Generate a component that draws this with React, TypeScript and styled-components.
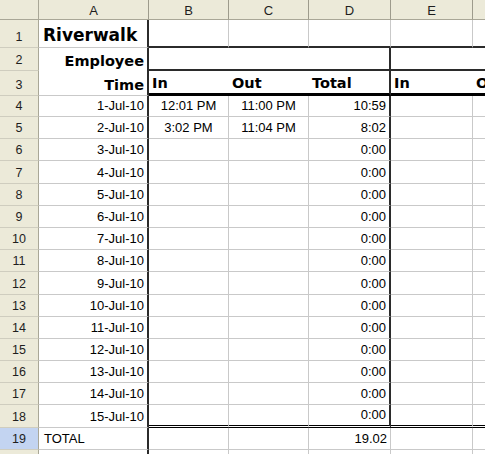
import styled, { createGlobalStyle, css } from 'styled-components';

const GlobalStyle = createGlobalStyle`
  html, body { margin: 0; padding: 0; background: #fff; }
  body { width: 485px; height: 454px; overflow: hidden; }
`;

type Edge = 'grid' | 'dark' | 'thick' | 'double' | 'none';

const edge = (e: Edge) => {
  switch (e) {
    case 'grid': return '1px solid #c9c9c9';
    case 'dark': return '2px solid #2b2b2b';
    case 'thick': return '3px solid #000';
    case 'double': return '3px double #000';
    default: return '0';
  }
};

const Sheet = styled.div`
  width: 485px;
  height: 454px;
  overflow: hidden;
  display: grid;
  grid-template-columns: 39px 110px 80px 80px 82px 82px 82px;
  grid-template-rows: 20px 28px 23px 25px 21px repeat(14, 22.2px) 22px 22px;
  font-family: "Liberation Sans", Arial, sans-serif;
  font-size: 13px;
  color: #000;
`;

const HeadBase = css`
  box-sizing: border-box;
  background: #ecead9;
  display: flex;
  align-items: center;
  justify-content: center;
  font-size: 13px;
  color: #1e1e1e;
`;

const Corner = styled.div`
  ${HeadBase};
  border-right: 1px solid #a9a797;
  border-bottom: 1px solid #a9a797;
`;

const ColHead = styled.div`
  ${HeadBase};
  border-right: 1px solid #9d9b8c;
  border-bottom: 1px solid #a9a797;
  padding-top: 1px;
`;

const RowHead = styled.div<{ $active?: boolean }>`
  ${HeadBase};
  border-right: 1px solid #a9a797;
  border-bottom: 1px solid #cfcdbf;
  background: ${p => (p.$active ? '#c3d4f1' : '#ecead9')};
  align-items: flex-end;
  padding-bottom: 3px;
  font-size: 12.5px;
`;

const Cell = styled.div<{
  $align?: 'left' | 'center' | 'right';
  $bold?: boolean;
  $big?: boolean;
  $right?: Edge;
  $bottom?: Edge;
  $span?: number;
}>`
  box-sizing: border-box;
  display: flex;
  align-items: flex-end;
  justify-content: ${p =>
    p.$align === 'right' ? 'flex-end' : p.$align === 'center' ? 'center' : 'flex-start'};
  padding: 0 3px 3px 3px;
  white-space: nowrap;
  overflow: hidden;
  border-right: ${p => edge(p.$right ?? 'grid')};
  border-bottom: ${p => edge(p.$bottom ?? 'grid')};
  grid-column: ${p => (p.$span ? `span ${p.$span}` : 'auto')};
  line-height: 15px;
  ${p =>
    p.$bold &&
    css`
      font-family: "DejaVu Sans", Verdana, sans-serif;
      font-weight: 700;
      font-size: 14.5px;
      padding-bottom: 2px;
    `}
  ${p =>
    p.$big &&
    css`
      font-size: 17px;
      line-height: 19px;
      padding-left: 4px;
    `}
`;

// only the letters that fit in the window get a label
const columns = ['A', 'B', 'C', 'D', 'E', ''];

const times: Record<number, [string, string, string]> = {
  4: ['12:01 PM', '11:00 PM', '10:59'],
  5: ['3:02 PM', '11:04 PM', '8:02'],
};

const dayRows = Array.from({ length: 15 }, (_, i) => i + 4);

export default function App() {
  return (
    <>
      <GlobalStyle />
      <Sheet>
        <Corner />
        {columns.map((c, i) => (
          <ColHead key={i}>{c}</ColHead>
        ))}

        {/* row 1 */}
        <RowHead>1</RowHead>
        <Cell $bold $big $right="dark">Riverwalk</Cell>
        <Cell $bottom="dark" />
        <Cell $bottom="dark" />
        <Cell $bottom="dark" />
        <Cell $bottom="dark" />
        <Cell $bottom="dark" />

        {/* row 2 */}
        <RowHead>2</RowHead>
        <Cell $bold $align="right" $right="dark" $bottom="none">Employee</Cell>
        <Cell $span={3} $right="dark" $bottom="dark" />
        <Cell $span={2} $right="none" $bottom="dark" />

        {/* row 3 */}
        <RowHead>3</RowHead>
        <Cell $bold $align="right" $right="dark">Time</Cell>
        <Cell $bold $right="none" $bottom="thick">In</Cell>
        <Cell $bold $right="none" $bottom="thick">Out</Cell>
        <Cell $bold $right="dark" $bottom="thick">Total</Cell>
        <Cell $bold $right="none" $bottom="thick">In</Cell>
        <Cell $bold $right="none" $bottom="thick">Out</Cell>

        {dayRows.map(r => {
          const t = times[r];
          const b: Edge = r === 18 ? 'double' : 'grid';
          return [
            <RowHead key={`h${r}`}>{r}</RowHead>,
            <Cell key={`a${r}`} $align="right" $right="dark">{`${r - 3}-Jul-10`}</Cell>,
            <Cell key={`b${r}`} $align="center" $bottom={b}>{t ? t[0] : ''}</Cell>,
            <Cell key={`c${r}`} $align="center" $bottom={b}>{t ? t[1] : ''}</Cell>,
            <Cell key={`d${r}`} $align="right" $right="dark" $bottom={b}>{t ? t[2] : '0:00'}</Cell>,
            <Cell key={`e${r}`} $bottom={b} />,
            <Cell key={`f${r}`} $bottom={b} />,
          ];
        })}

        {/* row 19 */}
        <RowHead $active>19</RowHead>
        <Cell $right="dark" style={{ paddingLeft: 5 }}>TOTAL</Cell>
        <Cell />
        <Cell />
        <Cell $align="right">19.02</Cell>
        <Cell />
        <Cell />

        {/* row 20, only its top edge shows */}
        <RowHead />
        <Cell $right="dark" />
        <Cell />
        <Cell />
        <Cell />
        <Cell />
        <Cell />
      </Sheet>
    </>
  );
}
